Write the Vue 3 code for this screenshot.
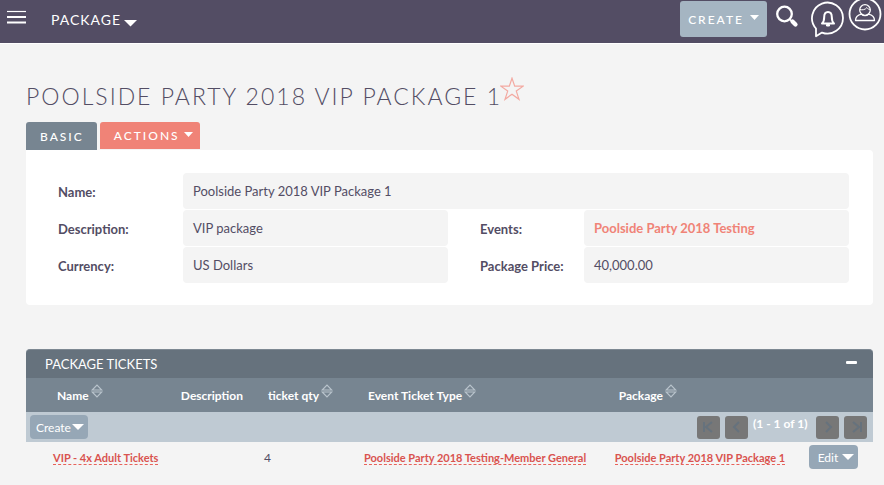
<script setup>
import { ref } from 'vue'

const fields = [
  { label: 'Name:', value: 'Poolside Party 2018 VIP Package 1', wide: true },
  { label: 'Description:', value: 'VIP package' },
  { label: 'Events:', value: 'Poolside Party 2018 Testing', link: true },
  { label: 'Currency:', value: 'US Dollars' },
  { label: 'Package Price:', value: '40,000.00' },
]

const columns = [
  { title: 'Name', sortable: true },
  { title: 'Description', sortable: false },
  { title: 'ticket qty', sortable: true },
  { title: 'Event Ticket Type', sortable: true },
  { title: 'Package', sortable: true },
]

const tickets = [
  {
    name: 'VIP - 4x Adult Tickets',
    description: '',
    qty: 4,
    type: 'Poolside Party 2018 Testing-Member General',
    pack: 'Poolside Party 2018 VIP Package 1',
  },
]

const open = ref(true)
</script>

<template>
  <div class="page">
    <header class="topbar">
      <button class="icon-btn menu" aria-label="Menu">
        <svg width="20" height="14" viewBox="0 0 20 14"><path d="M0 1.500h19" stroke="#fff" stroke-width="1.200" /><path d="M0 7h19M0 12.500h19" stroke="#fff" stroke-width="2" /></svg>
      </button>
      <button class="module">
        PACKAGE
        <svg class="module-caret" width="13" height="7" viewBox="0 0 13 7"><path d="M0 0h13L6.500 6.500z" fill="#fff" /></svg>
      </button>
      <div class="tools">
        <button class="create">
          CREATE
          <svg class="caret" width="9" height="5" viewBox="0 0 9 5"><path d="M0 0h9L4.500 5z" fill="#fff" /></svg>
        </button>
        <button class="icon-btn search" aria-label="Search">
          <svg width="24" height="24" viewBox="0 0 24 24" fill="none" stroke="#fff">
            <circle cx="9.500" cy="9" r="7.300" stroke-width="2.300" />
            <path d="M14.500 14l2.500 2.500" stroke-width="1.600" />
            <path d="M17.500 16.500l3 3" stroke-width="4.200" stroke-linecap="round" />
          </svg>
        </button>
        <button class="icon-btn bell" aria-label="Notifications">
          <svg width="34" height="37" viewBox="0 0 34 37" fill="none" stroke="#fff" stroke-width="1.800">
            <path d="M5 27.500A15.500 15.500 0 1 1 11 31.600L5 35.300z" stroke-linejoin="round" />
            <path d="M11 22.500c1.800-1.500 2.200-3 2.200-6.500 0-3 1.500-5 3.800-5s3.800 2 3.800 5c0 3.500.4 5 2.200 6.500z" stroke-width="2" stroke-linejoin="round" />
            <path d="M15.500 23.500h3v1.500h-3z" fill="#fff" stroke-width="1" />
          </svg>
        </button>
        <button class="icon-btn user" aria-label="Profile">
          <svg width="34" height="34" viewBox="0 0 34 34" fill="none" stroke="#fff">
            <circle cx="17" cy="17" r="15.500" stroke-width="1.800" />
            <circle cx="17" cy="13" r="5.300" stroke-width="1.300" />
            <path d="M12 12.500c2.300.8 5.300.2 6.800-1.900 1 1.400 2.200 1.900 3.400 1.900" stroke-width="1" />
            <path d="M7.500 23.500c0-3.800 2.500-5.500 6-6.300 2 1.900 5 1.900 7 0 3.500.8 6 2.500 6 6.300z" stroke-width="1.300" stroke-linejoin="round" />
          </svg>
        </button>
      </div>
    </header>

    <main class="content">
      <div class="heading">
        <h1>POOLSIDE PARTY 2018 VIP PACKAGE 1</h1>
        <button class="icon-btn star" aria-label="Favorite">
          <svg width="24" height="24" viewBox="0 0 24 24" fill="none" stroke="#f3a9a1" stroke-width="1.200">
            <path d="M12 1.200l2.700 8h8.500l-6.900 4.900 2.700 8.200-7-5.100-7 5.100 2.700-8.200L.8 9.200h8.500z" />
          </svg>
        </button>
      </div>

      <nav class="tabs">
        <button class="tab basic">BASIC</button>
        <button class="tab actions">
          ACTIONS
          <svg class="caret" width="9" height="5" viewBox="0 0 9 5"><path d="M0 0h9L4.500 5z" fill="#fff" /></svg>
        </button>
      </nav>

      <dl class="card">
        <div v-for="f in fields" :key="f.label" class="field" :class="{ wide: f.wide }">
          <dt>{{ f.label }}</dt>
          <dd>
            <a v-if="f.link" href="#">{{ f.value }}</a>
            <template v-else>{{ f.value }}</template>
          </dd>
        </div>
      </dl>

      <section class="panel">
        <div class="panel-head">
          <h2>PACKAGE TICKETS</h2>
          <button class="icon-btn" aria-label="Collapse" @click="open = !open">
            <svg width="12" height="12" viewBox="0 0 12 12"><rect x="1" y="3" width="11" height="3" rx="1" fill="#fff" /></svg>
          </button>
        </div>
        <table v-if="open">
          <colgroup>
            <col class="c-name" /><col class="c-desc" /><col class="c-qty" /><col class="c-type" /><col class="c-pack" /><col class="c-edit" />
          </colgroup>
          <thead>
            <tr>
              <th v-for="c in columns" :key="c.title" scope="col">
                <span class="th-label">
                  {{ c.title }}
                  <svg v-if="c.sortable" class="sort" width="12" height="14" viewBox="0 0 12 14" fill="none" stroke="#b9c4cc" stroke-width="1.100">
                    <path d="M1.200 6L6 1l4.800 5zM1.200 8L6 13l4.800-5z" />
                  </svg>
                </span>
              </th>
              <td></td>
            </tr>
            <tr class="toolbar">
              <td colspan="6">
                <div class="bar">
                  <button class="small">
                    Create<svg width="12" height="6" viewBox="0 0 12 6"><path d="M0 0h12L6 6z" fill="#fff" /></svg>
                  </button>
                  <div class="pager">
                    <button disabled aria-label="First page"><svg viewBox="0 0 12 12"><path d="M1 1v10M9 1L3 6l6 5" /></svg></button>
                    <button disabled aria-label="Previous page"><svg viewBox="0 0 12 12"><path d="M8 1L3 6l5 5" /></svg></button>
                    <span>(1 - 1 of 1)</span>
                    <button disabled aria-label="Next page"><svg viewBox="0 0 12 12"><path d="M4 1l5 5-5 5" /></svg></button>
                    <button disabled aria-label="Last page"><svg viewBox="0 0 12 12"><path d="M3 1l6 5-6 5M11 1v10" /></svg></button>
                  </div>
                </div>
              </td>
            </tr>
          </thead>
          <tbody>
            <tr v-for="t in tickets" :key="t.name">
              <td><a href="#">{{ t.name }}</a></td>
              <td>{{ t.description }}</td>
              <td>{{ t.qty }}</td>
              <td><a href="#">{{ t.type }}</a></td>
              <td><a href="#">{{ t.pack }}</a></td>
              <td>
                <button class="small edit">
                  Edit<svg width="12" height="6" viewBox="0 0 12 6"><path d="M0 0h12L6 6z" fill="#fff" /></svg>
                </button>
              </td>
            </tr>
          </tbody>
        </table>
      </section>
    </main>
  </div>
</template>

<style>
body {
  background: #f4f4f4;
}
</style>

<style scoped>
.page {
  font-family: Lato, sans-serif;
  font-size: 13px;
  color: #534d64;
}
button {
  font: inherit;
  color: #fff;
  border: 0;
  margin: 0;
  padding: 0;
  cursor: pointer;
}
svg {
  display: block;
  flex: none;
}
.icon-btn {
  background: none;
}
.topbar {
  display: flex;
  align-items: flex-start;
  height: 44px;
  padding-left: 7px;
  background: #534d64;
  border-bottom: 1px solid #fff;
  box-sizing: border-box;
  overflow: hidden;
}
.menu {
  padding-top: 10px;
}
.module {
  display: flex;
  align-items: center;
  gap: 3px;
  margin-left: 24px;
  height: 38px;
  background: none;
  font-size: 14px;
  letter-spacing: 1px;
}
.module-caret {
  margin-top: 8px;
}
.tools {
  display: flex;
  align-items: flex-start;
  margin-left: auto;
  padding-right: 2px;
}
.create {
  display: flex;
  align-items: center;
  gap: 6px;
  height: 36px;
  margin-top: 1px;
  padding: 0 8px;
  background: #a5b5c2;
  border-radius: 3px;
  font-size: 12px;
  font-weight: 500;
  letter-spacing: 2px;
}
.caret {
  margin-bottom: 3px;
}
.search {
  padding: 5px 0 0 8px;
}
.bell {
  padding: 1px 0 0 12px;
}
.user {
  margin: -3px 0 0 3px;
}
.content {
  padding: 34px 11px 0 26px;
}
.heading {
  display: flex;
  align-items: flex-start;
}
h1 {
  margin: 0;
  font-size: 23px;
  line-height: 36px;
  font-weight: 300;
  letter-spacing: 2px;
}
.star {
  margin: -1px 0 0 -2px;
}
.tabs {
  display: flex;
  align-items: flex-start;
  gap: 3px;
  margin-top: 8px;
}
.tab {
  display: flex;
  align-items: center;
  height: 27px;
  padding: 0 13px 0 14px;
  border-radius: 3px 3px 0 0;
  font-size: 12px;
  font-weight: 500;
  letter-spacing: 2px;
}
.basic {
  height: 28px;
  background: #778591;
}
.actions {
  gap: 4px;
  padding-right: 7px;
  background: #f08377;
}
.card {
  display: grid;
  grid-template-columns: 390fr 401fr;
  row-gap: 1px;
  margin: 0;
  padding: 23px 24px 22px 32px;
  background: #fff;
  border-radius: 0 4px 4px 4px;
}
.field {
  display: grid;
  grid-template-columns: 125fr 265fr;
  line-height: 36px;
}
.field:nth-child(odd) {
  grid-template-columns: 136fr 265fr;
}
.field:nth-child(odd) dt {
  padding-left: 32px;
}
.field.wide {
  grid-column: 1 / -1;
  grid-template-columns: 125fr 666fr;
}
.field.wide dt {
  padding-left: 0;
}
dt {
  font-weight: 700;
  line-height: 38px;
  height: 36px;
}
dd {
  margin: 0;
  padding: 0 10px;
  background: #f4f4f4;
  border-radius: 4px;
}
a {
  text-decoration: none;
}
dd a {
  color: #f08377;
  font-weight: 700;
}
.panel {
  margin-top: 44px;
}
.panel-head {
  display: flex;
  align-items: center;
  justify-content: space-between;
  height: 28px;
  padding: 0 16px 0 19px;
  background: #66727d;
  border-top: 1px solid #7d8892;
  border-radius: 4px 4px 0 0;
}
h2 {
  margin: 0;
  color: #fff;
  font-size: 13px;
  font-weight: 400;
}
table {
  width: 100%;
  table-layout: fixed;
  border-collapse: collapse;
  font-size: 12px;
}
.c-name { width: 17.100%; }
.c-desc { width: 10.300%; }
.c-qty { width: 11.800%; }
.c-type { width: 29.600%; }
.c-pack { width: 22.900%; }
.c-edit { width: 8.300%; }
thead tr {
  height: 34px;
  background: #778591;
}
th {
  padding: 0 0 0 10px;
  color: #fff;
  text-align: left;
  font-weight: 700;
  white-space: nowrap;
}
th:first-child {
  padding-left: 31px;
}
.th-label {
  display: flex;
  align-items: center;
  gap: 2px;
}
.sort {
  margin-bottom: 8px;
}
thead .toolbar {
  height: 30px;
  background: #bfcad3;
}
td {
  padding: 0 0 0 6px;
  white-space: nowrap;
}
tbody td:first-child {
  padding-left: 27px;
}
tbody tr {
  height: 30px;
}
td a {
  color: #d9534f;
  font-size: 11px;
  font-weight: 700;
  border-bottom: 1px dashed #e8625a;
}
.toolbar td {
  padding: 0 6px 0 4px;
}
.bar,
.pager {
  display: flex;
  align-items: center;
}
.bar {
  justify-content: space-between;
}
.small {
  display: flex;
  align-items: center;
  gap: 1px;
  height: 24px;
  padding: 0 4px 0 6px;
  background: #96a7b6;
  border-radius: 4px;
}
.edit {
  gap: 4px;
  padding-left: 9px;
}
.pager {
  gap: 5px;
}
.pager button {
  display: flex;
  align-items: center;
  justify-content: center;
  width: 23px;
  height: 23px;
  background: #777;
  border-radius: 3px;
}
.pager button svg {
  width: 12px;
  height: 12px;
  fill: none;
  stroke: #66727d;
  stroke-width: 2;
}
.pager span {
  width: 58px;
  padding-bottom: 7px;
  color: #fff;
  font-weight: 700;
}
</style>
